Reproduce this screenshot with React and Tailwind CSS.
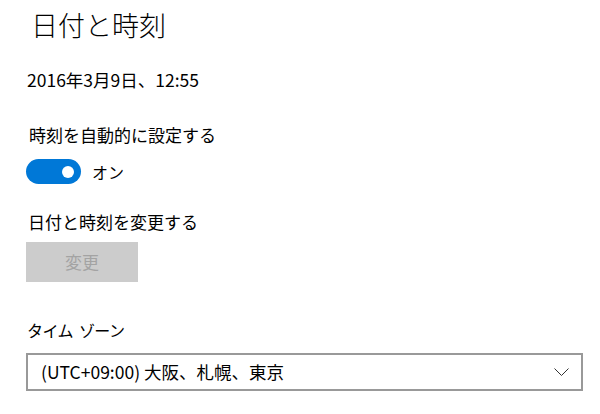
const font = { fontFamily: '"Noto Sans CJK JP", "Noto Sans", sans-serif' };

const App = () => {
  return (
    <div className="w-[600px] h-[414px] bg-white text-black overflow-hidden pl-[26px]" style={font}>
      {/* Title */}
      <h1 className="pt-[7px] h-[43px] text-[27px] leading-[36px] font-extralight pl-[5px]">日付と時刻</h1>

      {/* Current date */}
      <p className="mt-[25px] text-[17.5px] leading-[24px] pl-px">2016年3月9日、12:55</p>

      {/* Auto set */}
      <p className="mt-[31px] text-[17px] leading-[24px] pl-[3px]">時刻を自動的に設定する</p>
      <div className="mt-[12px] flex items-center gap-[11px]">
        <div className="w-[55px] h-[25px] rounded-full bg-[#0078d7] flex items-center justify-end pr-[7px]">
          <div className="w-[12px] h-[12px] rounded-full bg-white"></div>
        </div>
        <span className="text-[16px] leading-[24px]">オン</span>
      </div>

      {/* Change date */}
      <p className="mt-[26px] text-[17px] leading-[24px] pl-[2px]">日付と時刻を変更する</p>
      <button className="mt-[8px] w-[112px] h-[40px] bg-[#cccccc] text-[#a3a3a3] text-[17px] flex items-center justify-center">
        変更
      </button>

      {/* Time zone */}
      <p className="mt-[36px] text-[16px] leading-[24px] pl-px tracking-[-0.6px]">
        タイム<span className="inline-block w-[6px]"></span>ゾーン
      </p>
      <div className="mt-[11px] w-[557px] h-[38px] border-2 border-[#999999] flex items-center justify-between pl-[13px] pr-[12px]">
        <span className="text-[17.5px]">(UTC+09:00) 大阪、札幌、東京</span>
        <svg width="15" height="8" viewBox="0 0 15 8" fill="none">
          <polyline points="0.5,0.5 7.5,7.5 14.5,0.5" stroke="#333" strokeWidth="1" />
        </svg>
      </div>
    </div>
  );
};

export default App;
